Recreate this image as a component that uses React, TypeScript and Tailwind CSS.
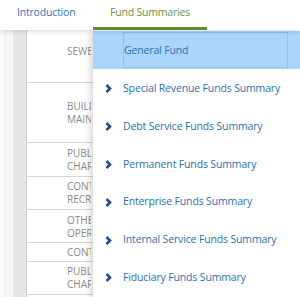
import React from "react"

const rows = [
  { h: "h-[53px]", pt: "pt-[15px]", lines: ["SEWER FUND"] },
  { h: "h-[60px]", pt: "pt-[17px]", lines: ["BUILDING", "MAINTENANCE"] },
  { h: "h-[34px]", pt: "pt-[4px]", lines: ["PUBLIC", "CHARGES"] },
  { h: "h-[33px]", pt: "pt-[3px]", lines: ["CONTRIBUTIONS", "RECREATION"] },
  { h: "h-[33px]", pt: "pt-[4px]", lines: ["OTHER", "OPERATING"] },
  { h: "h-[19px]", pt: "pt-[3px]", lines: ["CONTINGENCY"] },
  { h: "h-[33px]", pt: "pt-[3px]", lines: ["PUBLIC", "CHARGES"] },
]

const items = [
  "Special Revenue Funds Summary",
  "Debt Service Funds Summary",
  "Permanent Funds Summary",
  "Enterprise Funds Summary",
  "Internal Service Funds Summary",
  "Fiduciary Funds Summary",
]

function Chevron() {
  return (
    <svg width="7" height="9" viewBox="0 0 7 9" className="shrink-0">
      <polyline points="1.5,1 5,4.5 1.5,8" fill="none" stroke="#1d4f8f" strokeWidth="2.6" strokeLinejoin="miter" />
    </svg>
  )
}

export default function App() {
  return (
    <div className="relative w-[300px] h-[297px] overflow-hidden bg-white font-['Open_Sans',sans-serif]">
      {/* Tabs */}
      <div className="relative z-20 h-[30px] bg-white flex shadow-[0_2px_4px_rgba(0,0,0,0.12)]">
        <div className="w-[93px] pl-[17px] pt-[5px] text-[10.5px] tracking-[-0.2px] font-medium text-[#2f77c0]">Introduction</div>
        <div className="w-[114px] pl-[17px] pt-[5px] text-[10.5px] tracking-[-0.2px] font-medium text-[#6b9142] border-b-[3px] border-[#5f8b34]">
          Fund Summaries
        </div>
      </div>

      {/* Table behind */}
      <div className="flex h-[267px]">
        <div className="w-[5px] bg-[#fbfbfb] border-r border-[#ececec]" />
        <div className="w-[8px] bg-[#f6f6f6]" />
        <div className="w-[14px] bg-[#e6e6e6] border-r border-[#cfcfcf]" />
        <div className="flex-1 flex flex-col">
          {rows.map((r, i) => (
            <div key={i} className={`${r.h} ${r.pt} shrink-0 border-b border-[#d6d6d6] pl-[40px] text-[10px] leading-[13px] text-[#8a8a8a] whitespace-nowrap`}>
              <div className="w-[24px] overflow-hidden">
                {r.lines.map((l) => (
                  <div key={l}>{l}</div>
                ))}
              </div>
            </div>
          ))}
        </div>
      </div>

      {/* Dropdown menu */}
      <div className="absolute left-[93px] top-[30px] right-0 bottom-0 z-10 bg-white shadow-[-3px_2px_6px_rgba(0,0,0,0.15)] pt-[1px]">
        <div className="h-[38px] bg-[#acd5fc] pl-[30px] pr-[12px] py-[1px]">
          <div className="h-full border border-[#92c1ee] flex items-center pt-[2px] text-[10.5px] tracking-[-0.15px] text-[#2b6fb8]">
            General Fund
          </div>
        </div>
        {items.map((t) => (
          <div key={t} className="h-[37.8px] flex items-center pt-[2px] pl-[12px] gap-[11px] text-[10.5px] tracking-[-0.15px] text-[#2b6fb8] whitespace-nowrap">
            <Chevron />
            {t}
          </div>
        ))}
      </div>
    </div>
  )
}
